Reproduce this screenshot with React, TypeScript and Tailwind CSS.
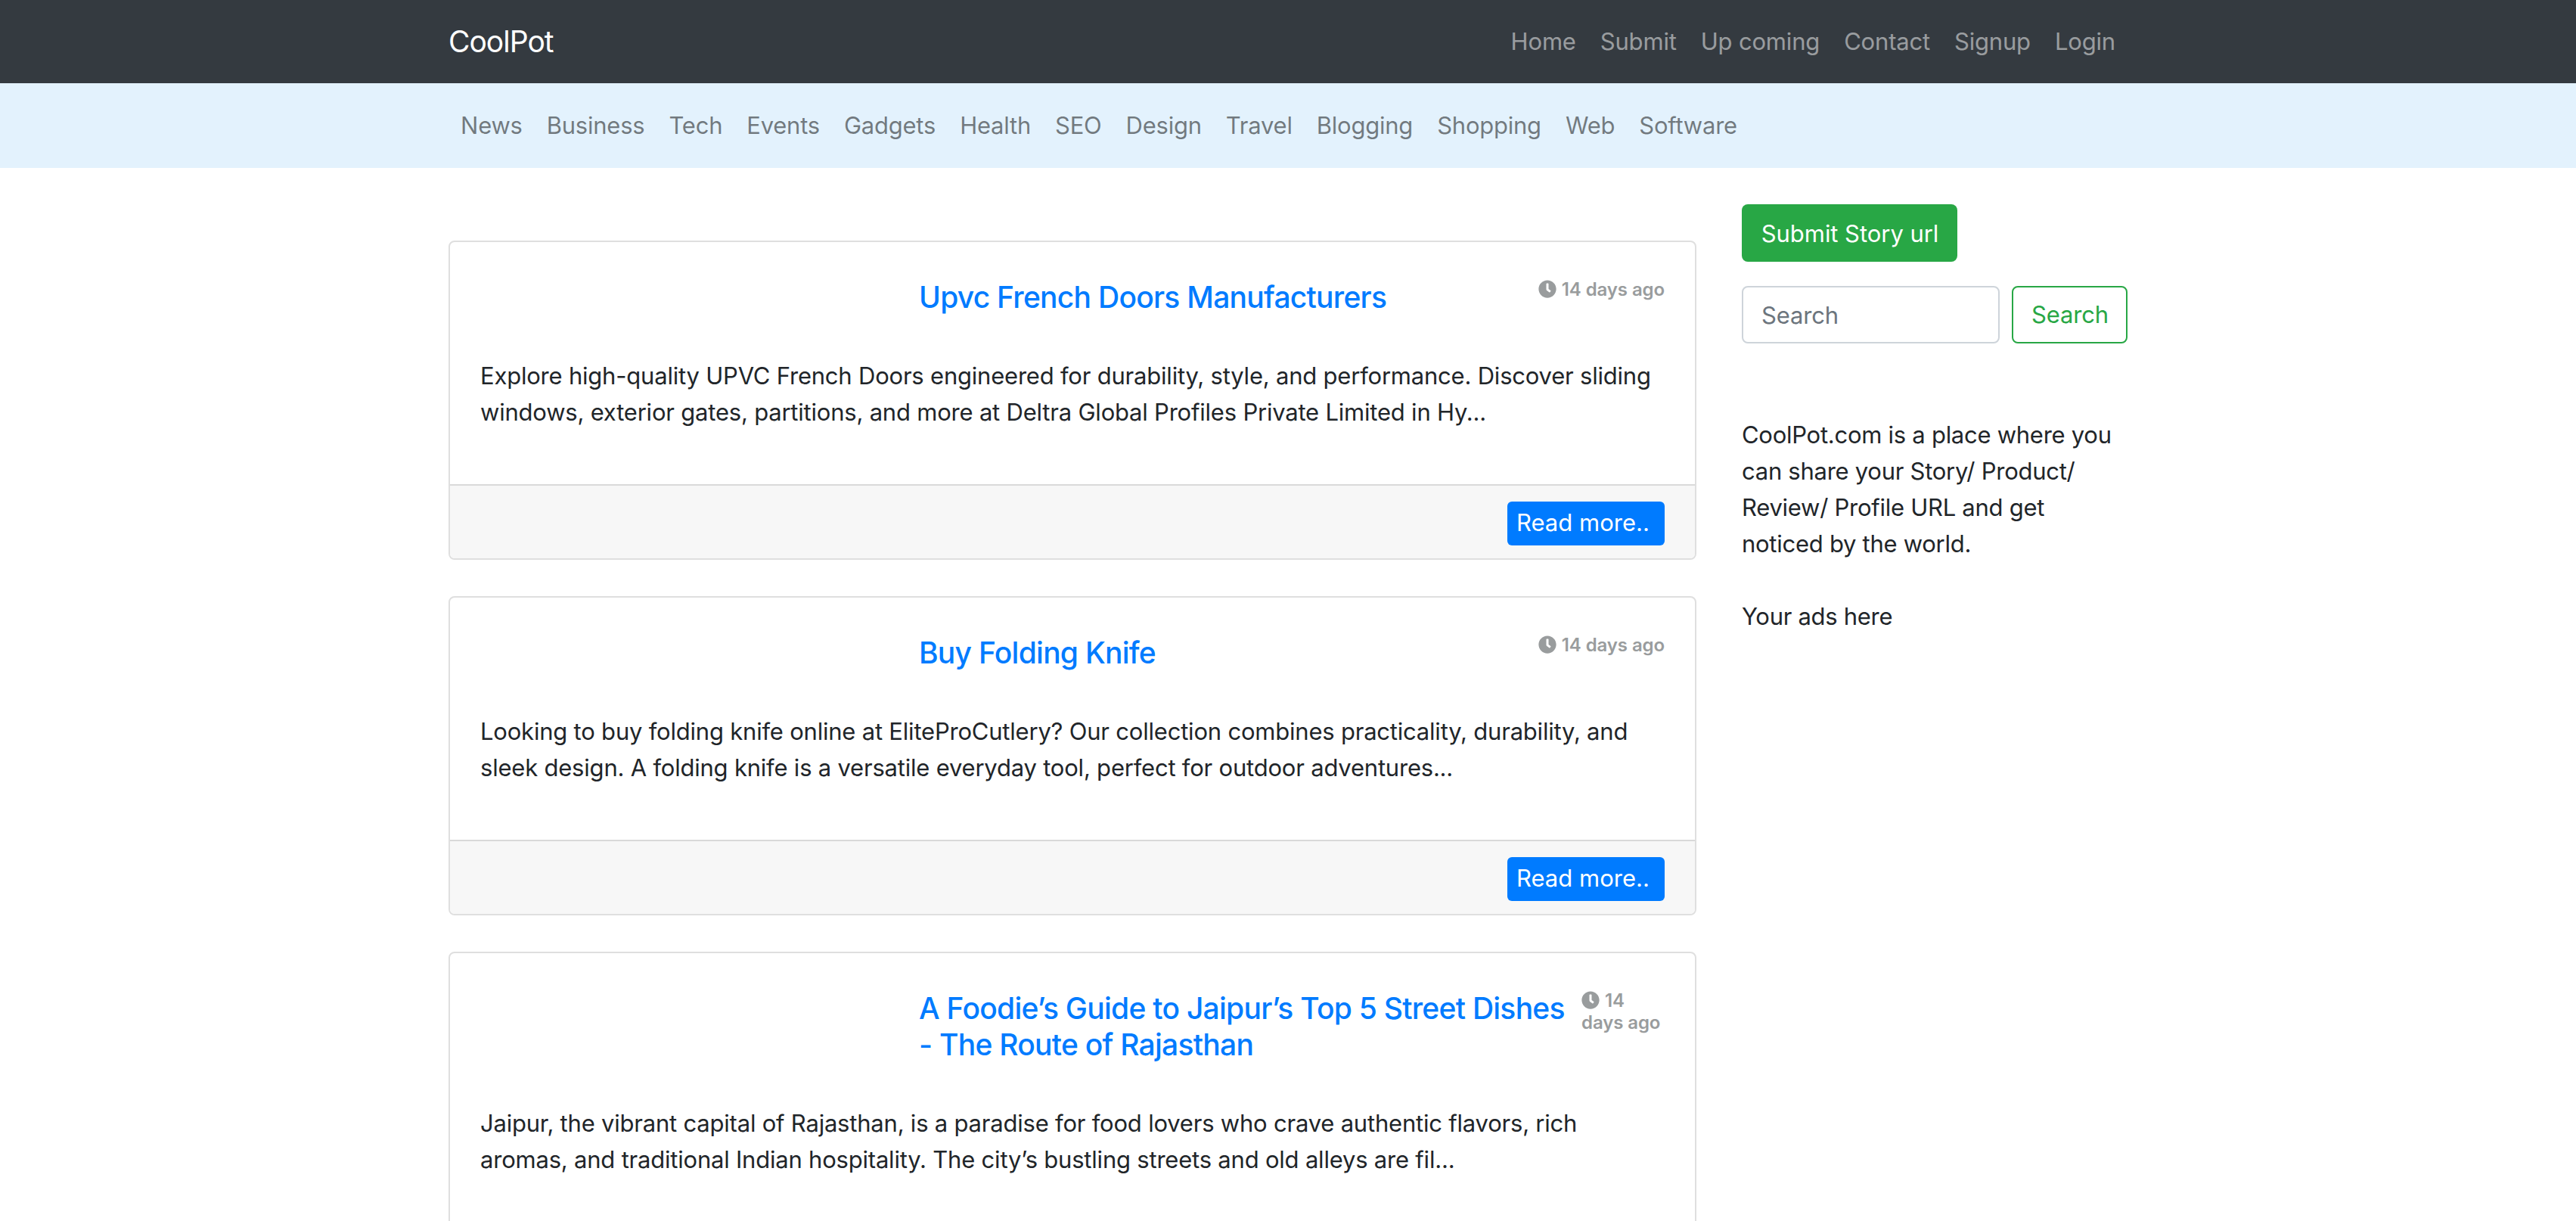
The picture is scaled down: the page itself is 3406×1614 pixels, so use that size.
import React from "react";
import { FaClock } from "react-icons/fa";

interface Story {
  title: string;
  excerpt: string;
  age: string;
  narrowAge?: boolean;
}

const NAV_LINKS = ["Home", "Submit", "Up coming", "Contact", "Signup", "Login"];

const CATEGORIES = [
  "News",
  "Business",
  "Tech",
  "Events",
  "Gadgets",
  "Health",
  "SEO",
  "Design",
  "Travel",
  "Blogging",
  "Shopping",
  "Web",
  "Software",
];

const STORIES: Story[] = [
  {
    title: "Upvc French Doors Manufacturers",
    excerpt:
      "Explore high-quality UPVC French Doors engineered for durability, style, and performance. Discover sliding windows, exterior gates, partitions, and more at Deltra Global Profiles Private Limited in Hy...",
    age: "14 days ago",
  },
  {
    title: "Buy Folding Knife",
    excerpt:
      "Looking to buy folding knife online at EliteProCutlery? Our collection combines practicality, durability, and sleek design. A folding knife is a versatile everyday tool, perfect for outdoor adventures...",
    age: "14 days ago",
  },
  {
    title: "A Foodie’s Guide to Jaipur’s Top 5 Street Dishes - The Route of Rajasthan",
    excerpt:
      "Jaipur, the vibrant capital of Rajasthan, is a paradise for food lovers who crave authentic flavors, rich aromas, and traditional Indian hospitality. The city’s bustling streets and old alleys are fil...",
    age: "14 days ago",
    narrowAge: true,
  },
];

const Navbar: React.FC = () => (
  <nav className="h-[110px] bg-[#343a40]">
    <div className="mx-auto flex h-full w-[2220px] items-center justify-between">
      <a href="#" className="text-[39px] leading-[60px] tracking-[-1px] text-white">
        CoolPot
      </a>
      <ul className="flex tracking-[-0.18px]">
        {NAV_LINKS.map((link) => (
          <li key={link}>
            <a href="#" className="block px-4 text-white/50">
              {link}
            </a>
          </li>
        ))}
      </ul>
    </div>
  </nav>
);

const CategoryBar: React.FC = () => (
  <nav className="h-[112px] bg-[#e3f2fd]">
    <ul className="mx-auto flex h-full w-[2220px] items-center tracking-[-0.23px]">
      {CATEGORIES.map((category) => (
        <li key={category}>
          <a href="#" className="block px-4 text-black/50">
            {category}
          </a>
        </li>
      ))}
    </ul>
  </nav>
);

const StoryCard: React.FC<{ story: Story }> = ({ story }) => (
  <article className="overflow-hidden rounded-lg border-2 border-[#dfdfdf] bg-white">
    <div className="px-10 pt-12 pb-[71px]">
      <div className="flex items-start">
        <div className="w-[580px] shrink-0" />
        <h5 className="mt-px flex-1 text-[39px] leading-[48px] font-medium tracking-[-0.74px] text-[#007bff]">
          <a href="#">{story.title}</a>
        </h5>
        <div
          className={
            story.narrowAge
              ? "ml-4 w-[110px] shrink-0 text-2xl leading-[29px] font-semibold tracking-[-0.1px] text-[#999c9d]"
              : "ml-4 shrink-0 text-2xl leading-[29px] font-semibold tracking-[-0.1px] text-[#999c9d]"
          }
        >
          <FaClock className="mr-[7px] inline-block size-6 align-[-3px]" />
          {story.age}
        </div>
      </div>
      <p className="mt-14 tracking-[-0.21px]">{story.excerpt}</p>
    </div>
    <div className="flex justify-end border-t-2 border-[#d9d9d9] bg-[#f7f7f7] px-10 pt-[21px] pb-[17px]">
      <a href="#" className="h-[58px] w-[208px] rounded-md bg-[#007bff] pl-3 leading-[56px] text-white">
        Read more..
      </a>
    </div>
  </article>
);

const Sidebar: React.FC = () => (
  <aside className="w-[510px] pt-12">
    <button className="block h-[76px] w-[285px] rounded-lg bg-[#28a745] pt-px pl-px tracking-[-0.05px] text-white">
      Submit Story url
    </button>
    <form className="mt-8 flex gap-4">
      <input
        type="search"
        placeholder="Search"
        className="h-[76px] w-[341px] rounded-lg border-2 border-[#ced4da] px-6 tracking-[-0.15px] placeholder:text-[#6c757d]"
      />
      <button
        type="button"
        className="h-[76px] flex-1 rounded-lg border-2 border-[#28a745] pl-px tracking-[-0.15px] text-[#28a745]"
      >
        Search
      </button>
    </form>
    <p className="mt-[97px] tracking-[-0.27px]">
      CoolPot.com is a place where you can share your Story/ Product/ Review/ Profile URL and get noticed by the
      world.
    </p>
    <p className="mt-12 tracking-[-0.3px]">Your ads here</p>
  </aside>
);

export default function App() {
  return (
    <div className="h-screen overflow-hidden bg-white font-['Inter','Liberation_Sans',sans-serif] text-[31px] leading-[48px] text-[#212529]">
      <Navbar />
      <CategoryBar />
      <div className="mx-auto flex w-[2220px] gap-[60px]">
        <main className="flex w-[1650px] shrink-0 flex-col gap-12 pt-24">
          {STORIES.map((story) => (
            <StoryCard key={story.title} story={story} />
          ))}
        </main>
        <Sidebar />
      </div>
    </div>
  );
}
